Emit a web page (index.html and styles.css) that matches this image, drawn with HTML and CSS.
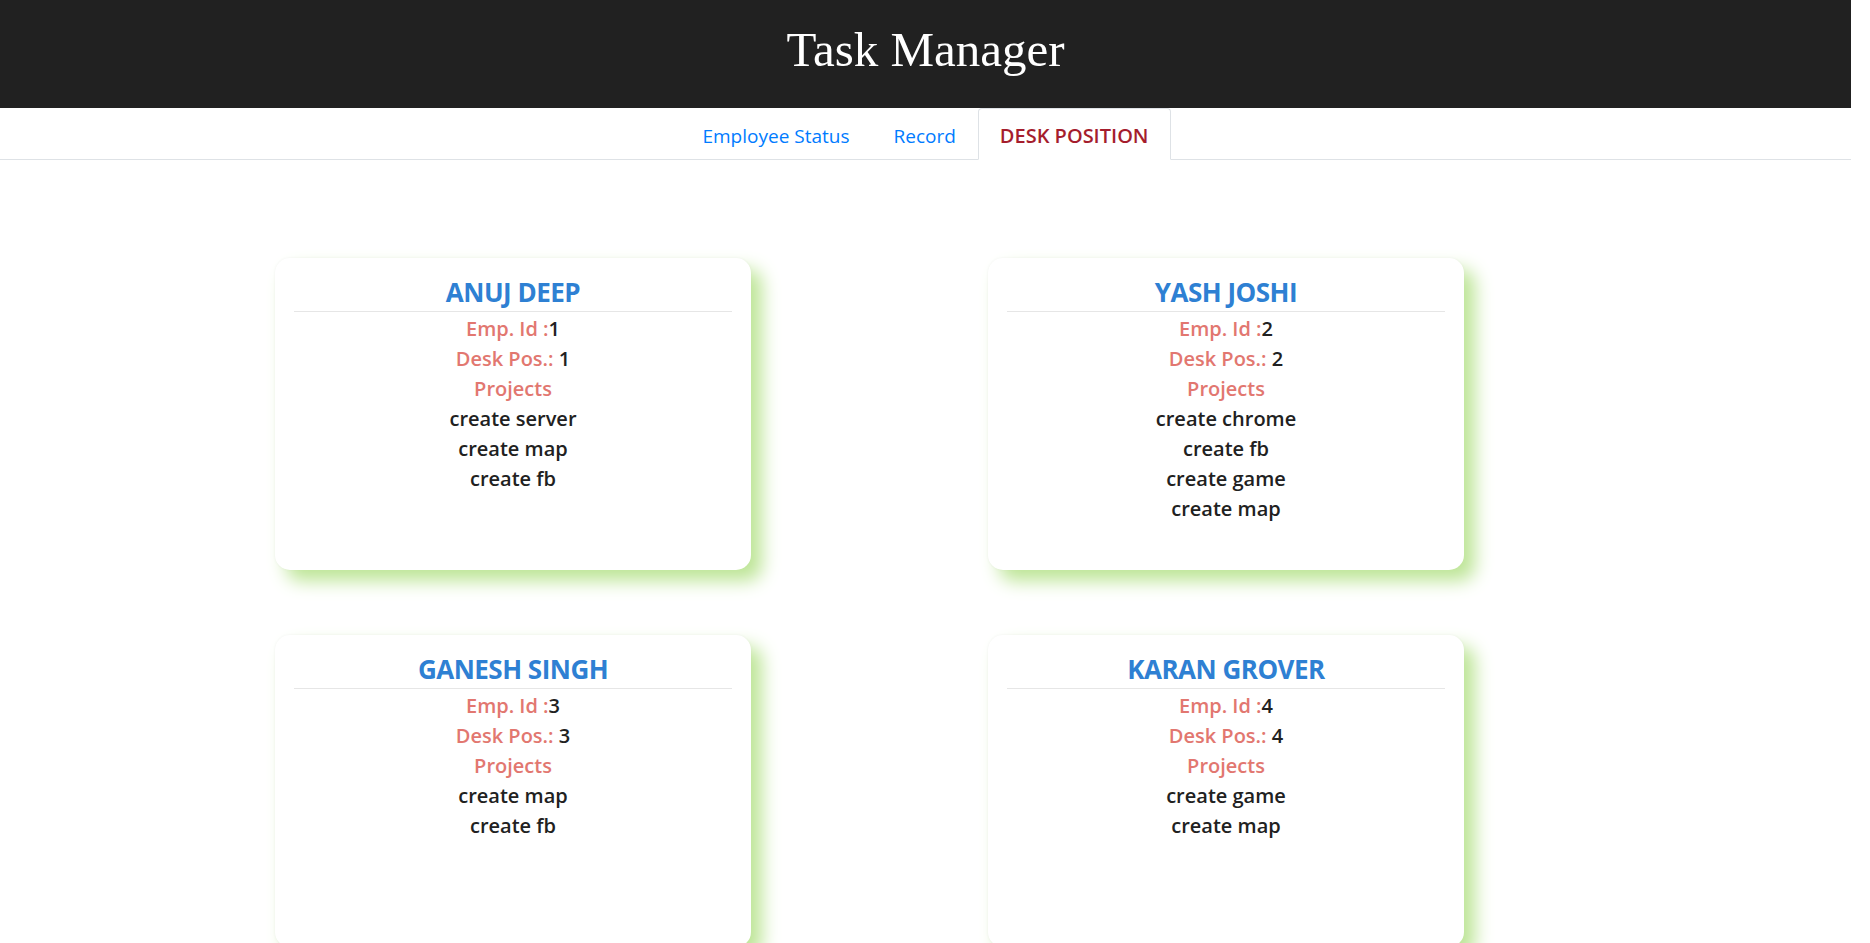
FILE: index.html
```html
<!DOCTYPE html>
<html lang="en">
<head>
<meta charset="utf-8">
<title>Task Manager</title>
<link rel="stylesheet" href="styles.css">
</head>
<body>
<div class="page">
  <header class="topbar">
    <h1 class="brand">Task Manager</h1>
  </header>
  <nav class="tabs">
    <ul class="tab-list">
      <li class="tab"><a class="tab-link" href="#">Employee Status</a></li>
      <li class="tab"><a class="tab-link" href="#">Record</a></li>
      <li class="tab active"><a class="tab-link" href="#">DESK POSITION</a></li>
    </ul>
  </nav>
  <main class="board">
    <section class="card">
      <h3 class="card-title">ANUJ DEEP</h3>
      <hr class="divider">
      <p class="line"><span class="label">Emp. Id :</span><span class="value">1</span></p>
      <p class="line"><span class="label">Desk Pos.:</span> <span class="value">1</span></p>
      <p class="line"><span class="label">Projects</span></p>
      <p class="line project">create server</p>
      <p class="line project">create map</p>
      <p class="line project">create fb</p>
    </section>
    <section class="card">
      <h3 class="card-title">YASH JOSHI</h3>
      <hr class="divider">
      <p class="line"><span class="label">Emp. Id :</span><span class="value">2</span></p>
      <p class="line"><span class="label">Desk Pos.:</span> <span class="value">2</span></p>
      <p class="line"><span class="label">Projects</span></p>
      <p class="line project">create chrome</p>
      <p class="line project">create fb</p>
      <p class="line project">create game</p>
      <p class="line project">create map</p>
    </section>
    <section class="card">
      <h3 class="card-title">GANESH SINGH</h3>
      <hr class="divider">
      <p class="line"><span class="label">Emp. Id :</span><span class="value">3</span></p>
      <p class="line"><span class="label">Desk Pos.:</span> <span class="value">3</span></p>
      <p class="line"><span class="label">Projects</span></p>
      <p class="line project">create map</p>
      <p class="line project">create fb</p>
    </section>
    <section class="card">
      <h3 class="card-title">KARAN GROVER</h3>
      <hr class="divider">
      <p class="line"><span class="label">Emp. Id :</span><span class="value">4</span></p>
      <p class="line"><span class="label">Desk Pos.:</span> <span class="value">4</span></p>
      <p class="line"><span class="label">Projects</span></p>
      <p class="line project">create game</p>
      <p class="line project">create map</p>
    </section>
  </main>
</div>
</body>
</html>
```

FILE: styles.css
```css
html, body {
  margin: 0;
  padding: 0;
  background: #ffffff;
}

body {
  font-family: "Open Sans", "Noto Sans", sans-serif;
  color: #212121;
}

.page {
  margin-right: 19px;
}

.topbar {
  background: #212121;
  height: 108px;
  box-sizing: border-box;
  padding-top: 21px;
  text-align: center;
}

.brand {
  margin: 0;
  font-family: "Liberation Serif", "Times New Roman", serif;
  font-weight: 400;
  font-size: 49px;
  line-height: normal;
  color: #ffffff;
}

.tabs {
  border-bottom: 1px solid #dee2e6;
}

.tab-list {
  list-style: none;
  margin: 0;
  padding: 0;
  display: flex;
  justify-content: center;
}

.tab {
  margin-bottom: -1px;
}

.tab-link {
  display: block;
  padding: 12px 21px 8px;
  border: 1px solid transparent;
  border-top-left-radius: 4px;
  border-top-right-radius: 4px;
  font-size: 19px;
  line-height: 30px;
  color: #007bff;
  text-decoration: none;
}

.tab.active .tab-link {
  color: #a51d2d;
  font-size: 20px;
  font-weight: 600;
  background: #ffffff;
  border-color: #dee2e6 #dee2e6 #ffffff;
}

.board {
  display: grid;
  grid-template-columns: 476px 476px;
  column-gap: 237px;
  row-gap: 65px;
  padding: 98px 0 0 275px;
}

.card {
  height: 312px;
  box-sizing: border-box;
  padding: 17px 19px 0;
  background: #ffffff;
  border-radius: 15px;
  box-shadow: 11px 11px 18px #bde596, 0 0 3px rgba(0, 0, 0, 0.05);
  text-align: center;
}

.card-title {
  margin: 0;
  font-size: 26px;
  line-height: 34px;
  letter-spacing: -0.5px;
  font-weight: 700;
  color: #2e80d3;
}

.divider {
  margin: 2px 0 2px;
  border: 0;
  border-top: 1px solid #e6e6e6;
}

.line {
  margin: 0;
  font-size: 20px;
  line-height: 30px;
  font-weight: 600;
}

.label {
  color: #e27770;
}

.value {
  color: #212121;
}

.project {
  color: #212121;
}
```
